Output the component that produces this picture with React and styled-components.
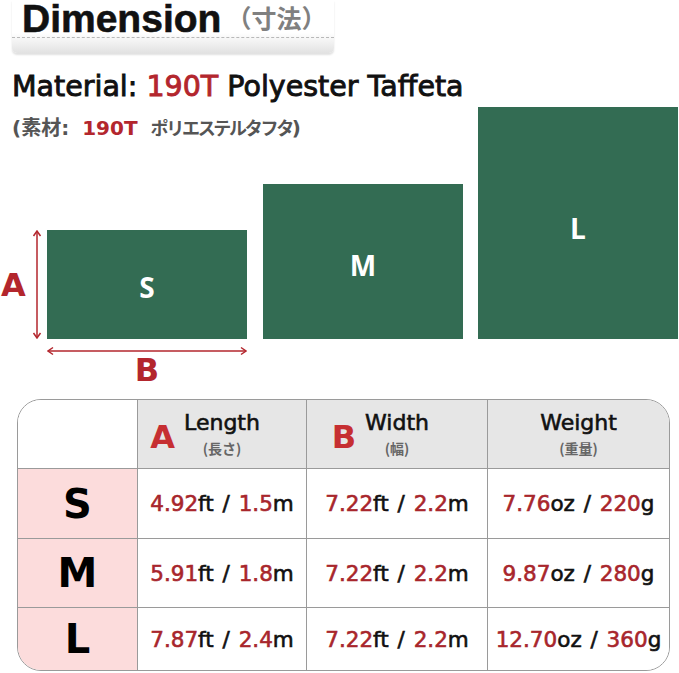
import styled, { createGlobalStyle } from 'styled-components'

const GlobalStyle = createGlobalStyle`
  body {
    margin: 0;
    background: #fff;
  }
`

const Page = styled.div`
  width: 679px;
  height: 673px;
  overflow: hidden;
  background: #fff;
  font-family: 'DejaVu Sans', 'Noto Sans CJK JP', sans-serif;
  color: #111;
`

const Banner = styled.div`
  margin-left: 12px;
  width: 322px;
  height: 53px;
  border-radius: 0 0 5px 5px;
  background: linear-gradient(to bottom, #fff 0%, #fff 62%, #e2e2e2 100%);
  box-shadow: 0 2px 2px rgba(0, 0, 0, 0.12);
`

const TitleRow = styled.div`
  height: 37px;
  border-bottom: 1px dashed #b8b8b8;
  display: flex;
  align-items: flex-start;
  padding-left: 10px;
`

const TitleMain = styled.span`
  font-family: 'Liberation Sans', Arial, sans-serif;
  font-weight: 700;
  font-size: 39px;
  line-height: 37px;
  -webkit-text-stroke: 0.6px currentColor;
  color: #111;
`

const TitleSub = styled.span`
  font-family: 'Noto Sans CJK JP', sans-serif;
  font-weight: 700;
  font-size: 25px;
  line-height: 34px;
  color: #808080;
  margin-left: 5px;
`

const Material = styled.div`
  margin: 16px 0 0 12px;
  font-size: 28.5px;
  line-height: 36px;
  -webkit-text-stroke: 0.9px currentColor;
  white-space: nowrap;
`

const Red = styled.span`
  color: ${p => p.$tone || '#b3262d'};
  margin-left: ${p => p.$ml || 0}px;
`

const DiagramRow = styled.div`
  display: flex;
  margin-top: 2px;
  height: 232px;
  gap: 15px;
`

const LeftCol = styled.div`
  width: 463px;
  display: flex;
  flex-direction: column;
  justify-content: space-between;
`

const Subtitle = styled.div`
  margin: 7px 0 0 12px;
  font-size: 20px;
  font-weight: 700;
  line-height: 28px;
  color: #555;
  white-space: nowrap;
`

const Kana = styled.span`
  font-size: 18px;
  letter-spacing: -2.3px;
  margin-left: 13px;
`

const SmallRow = styled.div`
  display: flex;
  align-items: flex-end;
`

const SideMeasure = styled.div`
  width: 47px;
  height: 109px;
  display: flex;
  align-items: center;
`

const ArrowSlot = styled.span`
  display: flex;
  margin-left: 5px;
`

const MeasureLetter = styled.div`
  width: ${p => p.$w || 'auto'};
  margin-top: ${p => p.$mt || 0}px;
  text-align: center;
  font-weight: 700;
  font-size: 32px;
  line-height: 32px;
  color: #b3262d;
`

const Rect = styled.div`
  width: 200px;
  height: ${p => p.$h}px;
  margin-left: ${p => p.$ml || 0}px;
  padding-top: ${p => p.$pt || 5}px;
  box-sizing: border-box;
  background: #336c53;
  display: flex;
  align-items: center;
  justify-content: center;
  color: #fff;
  font-family: 'Open Sans', sans-serif;
  font-weight: 700;
  font-size: 28px;
  flex-shrink: 0;
`

const BottomMeasure = styled.div`
  margin-left: 47px;
  width: 200px;
  display: flex;
  flex-direction: column;
  align-items: center;
  svg {
    display: block;
    margin-top: 7px;
  }
`

const Table = styled.div`
  margin: 13px 0 0 17px;
  width: 653px;
  height: 272px;
  box-sizing: border-box;
  border: 1px solid #9a9a9a;
  border-radius: 24px;
  overflow: hidden;
  display: grid;
  grid-template-columns: 120px 169px 181px 1fr;
  grid-template-rows: 69px 70px 69px 1fr;

  & > *:nth-child(4n) {
    border-right: none;
  }
  & > *:nth-last-child(-n + 4) {
    border-bottom: none;
  }
`

const Cell = styled.div`
  box-sizing: border-box;
  border-right: 1px solid #9a9a9a;
  border-bottom: 1px solid #9a9a9a;
  background: ${p => p.$bg || '#fff'};
  display: flex;
  align-items: center;
  justify-content: center;
`

const HeadCell = styled.div`
  box-sizing: border-box;
  border-right: 1px solid #9a9a9a;
  border-bottom: 1px solid #9a9a9a;
  background: #e6e6e6;
  display: grid;
  grid-template-columns: 1fr auto 1fr;
  align-items: center;
`

const HeadLetter = styled.span`
  justify-self: end;
  margin: 6px 9px 0 0;
  font-weight: 700;
  font-size: 32px;
  line-height: 32px;
  color: #c62f32;
`

const HeadStack = styled.div`
  grid-column: 2;
  display: flex;
  flex-direction: column;
  align-items: center;
`

const HeadTitle = styled.span`
  font-size: 22px;
  line-height: 28px;
  -webkit-text-stroke: 0.6px currentColor;
  color: #111;
`

const HeadSub = styled.span`
  font-family: 'Noto Sans CJK JP', sans-serif;
  font-weight: 700;
  font-size: 14px;
  line-height: 22px;
  color: #666;
`

const SizeLabel = styled.span`
  font-weight: 700;
  font-size: 40px;
  color: #000;
`

const Value = styled.span`
  font-size: 21.5px;
  word-spacing: 2px;
  -webkit-text-stroke: 0.6px currentColor;
  color: #111;
  white-space: nowrap;
`

const ARROW = '#b3262d'

const VArrow = ({ h }) => (
  <svg width="10" height={h} viewBox={`0 0 10 ${h}`}>
    <line x1="5" y1="1" x2="5" y2={h - 1} stroke={ARROW} strokeWidth="1.5" />
    <polyline points="1.5,6 5,1 8.5,6" fill="none" stroke={ARROW} strokeWidth="1.5" />
    <polyline points={`1.5,${h - 6} 5,${h - 1} 8.5,${h - 6}`} fill="none" stroke={ARROW} strokeWidth="1.5" />
  </svg>
)

const HArrow = ({ w }) => (
  <svg width={w} height="10" viewBox={`0 0 ${w} 10`}>
    <line x1="1" y1="5" x2={w - 1} y2="5" stroke={ARROW} strokeWidth="1.5" />
    <polyline points="6,1.5 1,5 6,8.5" fill="none" stroke={ARROW} strokeWidth="1.5" />
    <polyline points={`${w - 6},1.5 ${w - 1},5 ${w - 6},8.5`} fill="none" stroke={ARROW} strokeWidth="1.5" />
  </svg>
)

const DATA_RED = '#a8262c'

const rows = [
  { size: 'S', len: ['4.92', '1.5'], wid: ['7.22', '2.2'], wt: ['7.76', '220'] },
  { size: 'M', len: ['5.91', '1.8'], wid: ['7.22', '2.2'], wt: ['9.87', '280'] },
  { size: 'L', len: ['7.87', '2.4'], wid: ['7.22', '2.2'], wt: ['12.70', '360'] },
]

const Measure = ({ a, ua, b, ub }) => (
  <Value>
    <Red $tone={DATA_RED}>{a}</Red>{ua} / <Red $tone={DATA_RED}>{b}</Red>{ub}
  </Value>
)

const App = () => {
  return (
    <Page>
      <GlobalStyle />
      <Banner>
        <TitleRow>
          <TitleMain>Dimension</TitleMain>
          <TitleSub>（寸法）</TitleSub>
        </TitleRow>
      </Banner>

      <Material>
        Material: <Red>190T</Red> Polyester Taffeta
      </Material>

      <DiagramRow>
        <LeftCol>
          <Subtitle>
            (素材:<Red $ml={13}>190T</Red><Kana>ポリエステルタフタ</Kana>)
          </Subtitle>
          <SmallRow>
            <SideMeasure>
              <MeasureLetter $w="27px">A</MeasureLetter>
              <ArrowSlot>
                <VArrow h={109} />
              </ArrowSlot>
            </SideMeasure>
            <Rect $h={109}>S</Rect>
            <Rect $h={155} $ml={16} $pt={7}>M</Rect>
          </SmallRow>
        </LeftCol>
        <Rect $h={232} $pt={10}>L</Rect>
      </DiagramRow>

      <BottomMeasure>
        <HArrow w={200} />
        <MeasureLetter $mt={-2}>B</MeasureLetter>
      </BottomMeasure>

      <Table>
        <Cell />
        <HeadCell>
          <HeadLetter>A</HeadLetter>
          <HeadStack>
            <HeadTitle>Length</HeadTitle>
            <HeadSub>(長さ)</HeadSub>
          </HeadStack>
        </HeadCell>
        <HeadCell>
          <HeadLetter>B</HeadLetter>
          <HeadStack>
            <HeadTitle>Width</HeadTitle>
            <HeadSub>(幅)</HeadSub>
          </HeadStack>
        </HeadCell>
        <HeadCell>
          <HeadStack>
            <HeadTitle>Weight</HeadTitle>
            <HeadSub>(重量)</HeadSub>
          </HeadStack>
        </HeadCell>

        {rows.map(r => [
          <Cell key={r.size + 's'} $bg="#fcdcdc">
            <SizeLabel>{r.size}</SizeLabel>
          </Cell>,
          <Cell key={r.size + 'l'}>
            <Measure a={r.len[0]} ua="ft" b={r.len[1]} ub="m" />
          </Cell>,
          <Cell key={r.size + 'w'}>
            <Measure a={r.wid[0]} ua="ft" b={r.wid[1]} ub="m" />
          </Cell>,
          <Cell key={r.size + 'g'}>
            <Measure a={r.wt[0]} ua="oz" b={r.wt[1]} ub="g" />
          </Cell>,
        ])}
      </Table>
    </Page>
  )
}

export default App
